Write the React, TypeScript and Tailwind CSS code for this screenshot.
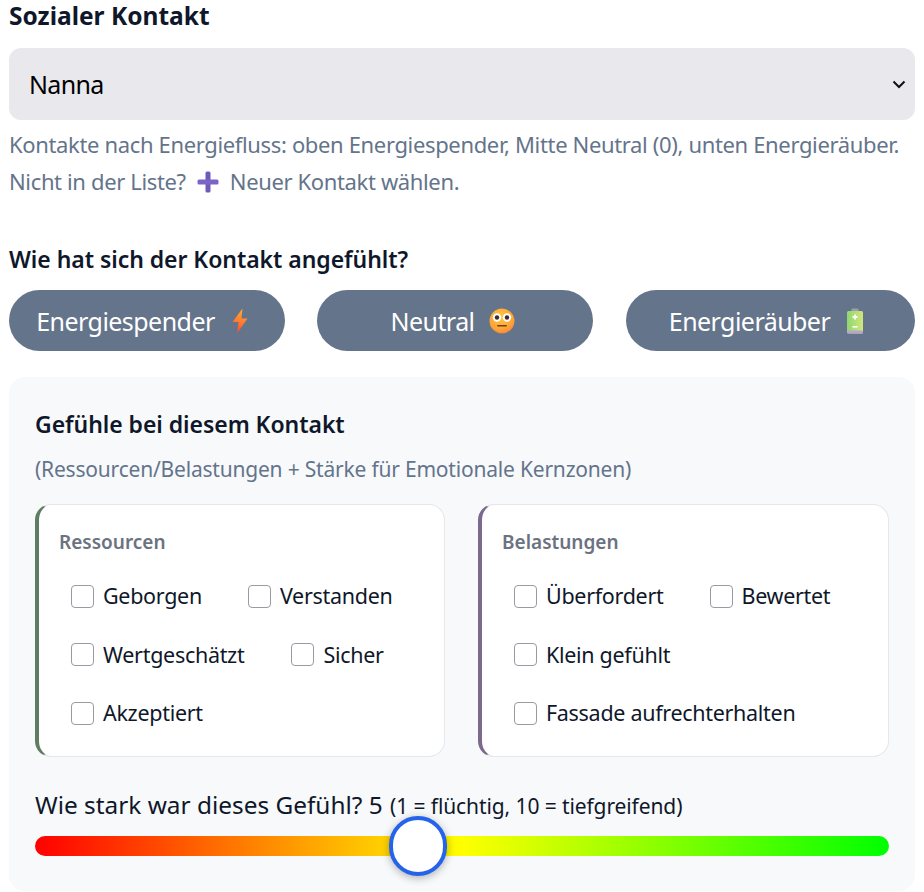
import { useState } from "react";
import type { ReactNode } from "react";

function Bolt() {
  return (
    <svg width="16" height="26" viewBox="0 0 16 26" className="shrink-0 mr-[10px]">
      <defs>
        <linearGradient id="bolt" x1="0.6" y1="0" x2="0.4" y2="1">
          <stop offset="0" stopColor="#ffb02e" />
          <stop offset="0.55" stopColor="#ff7a30" />
          <stop offset="1" stopColor="#f0483e" />
        </linearGradient>
      </defs>
      <path d="M10.5 0.5 L0.5 14 L6.5 14 L5 25.5 L15.5 10.5 L9.5 10.5 Z" fill="url(#bolt)" />
    </svg>
  );
}

function FaceEmoji() {
  return (
    <svg width="26" height="26" viewBox="0 0 26 26" className="shrink-0 mr-[5px]">
      <defs>
        <radialGradient id="face" cx="0.45" cy="0.35" r="0.75">
          <stop offset="0" stopColor="#ffc83d" />
          <stop offset="0.7" stopColor="#fda035" />
          <stop offset="1" stopColor="#e8705a" />
        </radialGradient>
      </defs>
      <circle cx="13" cy="13" r="12.5" fill="url(#face)" />
      <circle cx="8" cy="9.5" r="4.2" fill="#fff" />
      <circle cx="18" cy="9.5" r="4.2" fill="#fff" />
      <circle cx="8" cy="9.5" r="2.2" fill="#402a32" />
      <circle cx="18" cy="9.5" r="2.2" fill="#402a32" />
      <rect x="8" y="17" width="10" height="1.6" rx="0.8" fill="#6b3f2a" />
    </svg>
  );
}

function Battery() {
  return (
    <svg width="18" height="26" viewBox="0 0 18 26" className="shrink-0 mr-[8px] ml-px">
      <defs>
        <linearGradient id="batt" x1="0" y1="0" x2="1" y2="0">
          <stop offset="0" stopColor="#8ed86f" />
          <stop offset="1" stopColor="#d2e67c" />
        </linearGradient>
      </defs>
      <rect x="5.5" y="0.5" width="7" height="3.5" rx="1" fill="#9aa0a6" />
      <rect x="1" y="3" width="16" height="22.5" rx="1.5" fill="url(#batt)" />
      <rect x="1" y="22.5" width="16" height="3" rx="1" fill="#b9a4d0" />
      <path d="M9 6.5 v5 M6.5 9 h5" stroke="#fff" strokeWidth="1.8" />
      <rect x="6.5" y="18" width="5" height="1.6" fill="#fff" />
    </svg>
  );
}

function PlusIcon() {
  return (
    <svg width="24" height="24" viewBox="0 0 24 24" className="shrink-0">
      <rect x="9.5" y="1.5" width="5" height="21" rx="1.5" fill="#7159bd" />
      <rect x="1.5" y="9.5" width="21" height="5" rx="1.5" fill="#7c64c6" />
    </svg>
  );
}

function Check({ label }: { label: string }) {
  return (
    <label className="flex items-center gap-[9px] text-[21.5px] tracking-[-0.3px] leading-[30px] text-[#0f172a]">
      <span className="w-[23px] h-[23px] rounded-[4px] border border-[#9a9aa2] bg-white shrink-0" />
      {label}
    </label>
  );
}

function EnergyButton({ children, className }: { children: ReactNode; className: string }) {
  return (
    <button className={`h-[61px] rounded-full bg-[#64748b] text-white text-[25px] leading-[33px] tracking-[-0.55px] flex items-center justify-center ${className}`}>
      {children}
    </button>
  );
}

export default function App() {
  const [strength, setStrength] = useState(5);

  return (
    <div className="px-[9px] w-[924px] h-[892px] overflow-hidden bg-white text-[#0f172a] font-['Noto_Sans','Open_Sans',sans-serif]">
      <h2 className="text-[24.5px] leading-[32px] font-bold">Sozialer Kontakt</h2>
      <div className="relative mt-[16px]">
        <select className="block w-full h-[72px] rounded-[12px] appearance-none bg-[#e8e8ed] text-black text-[25px] tracking-[-0.7px] pl-5 pt-[2px]">
          <option>Nanna</option>
        </select>
        <svg width="14" height="9" viewBox="0 0 14 9" className="absolute right-[9px] top-[32px]">
          <path d="M1.5 1.5 L7 7 L12.5 1.5" fill="none" stroke="#111" strokeWidth="2" />
        </svg>
      </div>
      <p className="mt-[6px] text-[22px] tracking-[-0.35px] leading-[37px] text-[#64748b]">
        Kontakte nach Energiefluss: oben Energiespender, Mitte Neutral (0), unten Energieräuber.
      </p>
      <p className="text-[22px] tracking-[-0.36px] leading-[37px] text-[#64748b] flex items-center gap-[10px]">
        Nicht in der Liste? <PlusIcon /> Neuer Kontakt wählen.
      </p>

      <h3 className="mt-[43px] text-[23px] tracking-[-0.05px] leading-[32px] font-semibold">Wie hat sich der Kontakt angefühlt?</h3>
      <div className="mt-[15px] flex gap-[32px]">
        <EnergyButton className="w-[276px] gap-[17px]">
          <span className="pt-px">Energiespender</span> <Bolt />
        </EnergyButton>
        <EnergyButton className="w-[276px] gap-[14px]">
          <span className="pt-px">Neutral</span> <FaceEmoji />
        </EnergyButton>
        <EnergyButton className="flex-1 ml-px gap-[15px]">
          <span className="pt-px">Energieräuber</span> <Battery />
        </EnergyButton>
      </div>

      <section className="mt-[26px] h-[514px] rounded-[16px] bg-[#f8f9fb] px-[26px] pt-[30px]">
        <h4 className="text-[23px] tracking-[-0.05px] leading-[34px] font-semibold">Gefühle bei diesem Kontakt</h4>
        <p className="mt-[13px] text-[21px] tracking-[-0.2px] leading-[30px] text-[#64748b]">
          (Ressourcen/Belastungen + Stärke für Emotionale Kernzonen)
        </p>
        <div className="mt-[20px] flex gap-[33px]">
          <div className="w-[410px] h-[253px] rounded-[16px] bg-white border border-[#e5e7eb] border-l-4 border-l-[#5f7d62] pl-5 pt-[21px]">
            <h5 className="text-[19px] leading-[32px] font-semibold text-[#6b7280]">Ressourcen</h5>
            <div className="mt-[23px] pl-[12px] flex flex-col gap-[28.5px]">
              <div className="flex gap-[46px]">
                <Check label="Geborgen" />
                <Check label="Verstanden" />
              </div>
              <div className="flex gap-[47px]">
                <Check label="Wertgeschätzt" />
                <Check label="Sicher" />
              </div>
              <Check label="Akzeptiert" />
            </div>
          </div>
          <div className="flex-1 h-[253px] rounded-[16px] bg-white border border-[#e5e7eb] border-l-4 border-l-[#7b6a8e] pl-5 pt-[21px]">
            <h5 className="text-[19px] leading-[32px] font-semibold text-[#6b7280]">Belastungen</h5>
            <div className="mt-[23px] pl-[12px] flex flex-col gap-[28.5px]">
              <div className="flex gap-[46px]">
                <Check label="Überfordert" />
                <Check label="Bewertet" />
              </div>
              <Check label="Klein gefühlt" />
              <Check label="Fassade aufrechterhalten" />
            </div>
          </div>
        </div>

        <p className="mt-[31px] text-[24.4px] leading-[34px]">
          Wie stark war dieses Gefühl? {strength}{" "}
          <span className="ml-px text-[21px] tracking-[-0.1px]">(1 = flüchtig, 10 = tiefgreifend)</span>
        </p>
        <input
          type="range"
          min={1}
          max={10}
          value={strength}
          onChange={(e) => setStrength(Number(e.target.value))}
          className="mt-[13px] block w-full h-5 rounded-full appearance-none bg-[linear-gradient(to_right,#ff0000,#ffff00,#00ff00)] [&::-webkit-slider-thumb]:appearance-none [&::-webkit-slider-thumb]:w-[58px] [&::-webkit-slider-thumb]:h-[60px] [&::-webkit-slider-thumb]:rounded-full [&::-webkit-slider-thumb]:bg-white [&::-webkit-slider-thumb]:border-4 [&::-webkit-slider-thumb]:border-[#2563eb] [&::-webkit-slider-thumb]:shadow-[0_2px_8px_rgba(0,0,0,0.3)]"
        />
      </section>
    </div>
  );
}
